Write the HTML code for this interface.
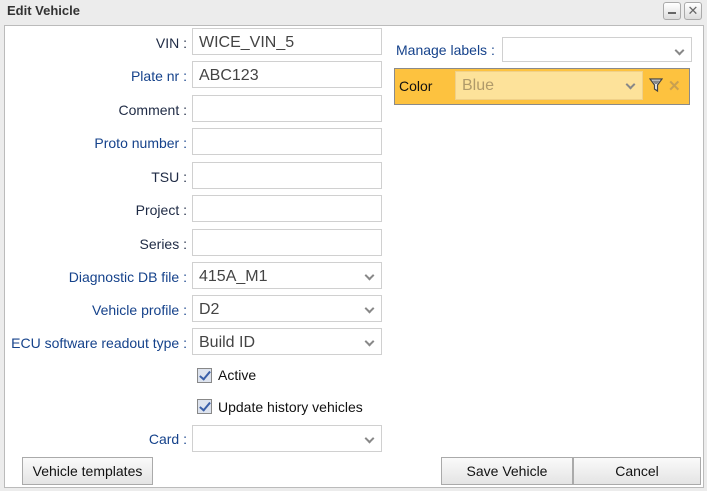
<!DOCTYPE html>
<html><head><style>
body{margin:0;width:707px;height:491px;background:#ececec;font-family:"Liberation Sans",Arial,sans-serif;position:relative;overflow:hidden}
.a{position:absolute}
.title{left:7px;top:3px;font-weight:bold;font-size:13px;color:#333}
.panel{left:4px;top:25px;width:698px;height:461px;background:#fff;border:1px solid #bbb}
.lbl{position:absolute;right:520px;font-size:14px;color:#15428b;text-align:right;white-space:nowrap}
.dk{color:#1e2a44}
.in{position:absolute;left:192px;height:27px;border:1px solid #d0d0d0;background:#fff;font-size:16px;color:#444;line-height:27px;padding-left:6px;box-sizing:border-box;width:190px}
.dd:after{content:"";position:absolute;right:8px;top:9px;width:5px;height:5px;border-right:2px solid #888;border-bottom:2px solid #888;transform:rotate(45deg)}
.cb{position:absolute;left:197px;width:15px;height:15px;border:1px solid #888;background:#dde3ee;box-sizing:border-box}
.cb:after{content:"";position:absolute;left:4px;top:0px;width:4px;height:9px;border-right:2px solid #3a5fa8;border-bottom:2px solid #3a5fa8;transform:rotate(40deg)}
.ct{position:absolute;left:218px;font-size:14px;color:#111}
.btn{position:absolute;top:457px;height:28px;border:1px solid #aaa;background:linear-gradient(#fafafa,#e4e4e4);font-size:14px;color:#111;text-align:center;line-height:27px;box-sizing:border-box}
.tb{position:absolute;top:2px;width:18px;height:18px;border:1px solid #aaa;border-radius:3px;background:linear-gradient(#fff,#ddd);box-sizing:border-box;color:#666;font-size:13px;text-align:center;line-height:16px}
</style></head><body>
<div class="a title">Edit Vehicle</div>
<div class="tb" style="left:663px"><div style="position:absolute;left:4px;top:9px;width:8px;height:2px;background:#666"></div></div>
<div class="tb" style="left:684px">✕</div>
<div class="a panel"></div>

<div class="lbl dk" style="top:35px">VIN :</div>
<div class="in" style="top:28px">WICE_VIN_5</div>
<div class="lbl" style="top:68px">Plate nr :</div>
<div class="in" style="top:61px">ABC123</div>
<div class="lbl dk" style="top:102px">Comment :</div>
<div class="in" style="top:95px"></div>
<div class="lbl" style="top:135px">Proto number :</div>
<div class="in" style="top:128px"></div>
<div class="lbl dk" style="top:169px">TSU :</div>
<div class="in" style="top:162px"></div>
<div class="lbl dk" style="top:202px">Project :</div>
<div class="in" style="top:195px"></div>
<div class="lbl dk" style="top:236px">Series :</div>
<div class="in" style="top:229px"></div>
<div class="lbl" style="top:269px">Diagnostic DB file :</div>
<div class="in dd" style="top:262px">415A_M1</div>
<div class="lbl" style="top:302px">Vehicle profile :</div>
<div class="in dd" style="top:295px">D2</div>
<div class="lbl" style="top:335px">ECU software readout type :</div>
<div class="in dd" style="top:328px">Build ID</div>
<div class="cb" style="top:368px"></div><div class="ct" style="top:367px">Active</div>
<div class="cb" style="top:399px"></div><div class="ct" style="top:399px">Update history vehicles</div>
<div class="lbl" style="top:431px">Card :</div>
<div class="in dd" style="top:425px"></div>

<div class="a" style="left:396px;top:42px;font-size:14px;color:#15428b">Manage labels :</div>
<div class="in dd" style="left:502px;top:37px;height:25px;width:190px"></div>
<div class="a" style="left:394px;top:68px;width:296px;height:37px;background:#fdc23f;border:1px solid #8a8a8a;box-sizing:border-box"></div>
<div class="a" style="left:399px;top:78px;font-size:14px;color:#111">Color</div>
<div class="in dd" style="left:455px;top:71px;width:188px;height:29px;background:#fde29a;border:1px solid #f0d088;color:#b09a6a;line-height:28px">Blue</div>
<svg class="a" style="left:649px;top:78px" width="14" height="15" viewBox="0 0 14 15"><path d="M1 1H13L8.5 7V13L5.5 11V7Z" fill="#eee" stroke="#444" stroke-width="1.2"/><path d="M3 2.5H11L8 6H6Z" fill="#888"/></svg>
<div class="a" style="left:668px;top:77px;font-size:15px;color:#c9a050;font-weight:bold">✕</div>

<div class="btn" style="left:22px;width:131px">Vehicle templates</div>
<div class="btn" style="left:441px;width:132px">Save Vehicle</div>
<div class="btn" style="left:573px;width:128px">Cancel</div>
</body></html>
